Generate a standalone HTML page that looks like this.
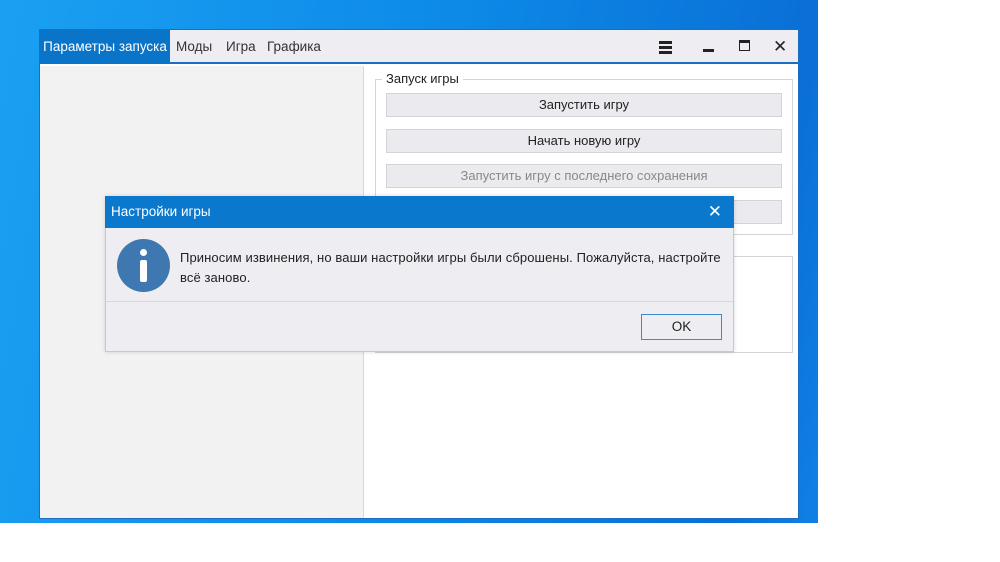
<!DOCTYPE html>
<html><head><meta charset="utf-8"><style>
*{margin:0;padding:0;box-sizing:border-box}
body{width:1000px;height:562px;background:#fff;position:relative;overflow:hidden;font-family:"Liberation Sans","DejaVu Sans",sans-serif;font-size:13px;color:#222}
.desk{position:absolute;left:0;top:0;width:818px;height:523px;background:linear-gradient(100deg,#1aa0f2 0%,#0d8ae8 50%,#0a6fd6 90%,#1180e6 100%)}
.abs{position:absolute}
.win{left:39px;top:29px;width:760px;height:490px;background:#fff;border:1px solid #1a6fc4}
.tb{left:0;top:0;width:758px;height:34px;background:#eeedf2;border-bottom:2px solid #1a6fc4}
.tab{top:0;height:34px;line-height:34px;font-size:13.5px;color:#333}
.btn{background:#ebeaef;border:1px solid #d4d3da;text-align:center;line-height:22px;font-size:13px;color:#222}
</style></head><body>
<div class="desk"></div>
<div class="abs win">
 <div class="abs tb">
  <div class="abs tab" style="left:0;width:130px;background:#0a74c9;color:#fff;text-align:center">Параметры запуска</div>
  <div class="abs tab" style="left:136px">Моды</div>
  <div class="abs tab" style="left:186px">Игра</div>
  <div class="abs tab" style="left:227px">Графика</div>
  <div class="abs" style="left:619px;top:11px;width:13px;height:3px;background:#222;box-shadow:0 5px 0 #222,0 10px 0 #222"></div>
  <div class="abs" style="left:663px;top:19px;width:11px;height:3px;background:#222"></div>
  <div class="abs" style="left:699px;top:10px;width:11px;height:11px;border:1.5px solid #222;border-top-width:3px"></div>
  <div class="abs" style="left:733px;top:7px;font-size:17px;color:#222">✕</div>
 </div>
 <div class="abs" style="left:0;top:36px;width:324px;height:452px;background:#f3f2f3;border-right:1px solid #d8d8de"></div>
 <div class="abs" style="left:335px;top:49px;width:418px;height:156px;border:1px solid #d4d3da"></div>
 <div class="abs" style="left:342px;top:41px;background:#fff;padding:0 4px;font-size:13px">Запуск игры</div>
 <div class="abs btn" style="left:346px;top:63px;width:396px;height:24px">Запустить игру</div>
 <div class="abs btn" style="left:346px;top:99px;width:396px;height:24px">Начать новую игру</div>
 <div class="abs btn" style="left:346px;top:134px;width:396px;height:24px;color:#888">Запустить игру с последнего сохранения</div>
 <div class="abs btn" style="left:346px;top:170px;width:396px;height:24px"></div>
 <div class="abs" style="left:335px;top:226px;width:418px;height:97px;border:1px solid #d4d3da"></div>
</div>
<div class="abs" style="left:105px;top:196px;width:629px;height:156px;background:#eeedf2;border:1px solid #c8c7d0;box-shadow:0 0 4px rgba(0,0,0,.15)">
 <div class="abs" style="left:-1px;top:-1px;width:629px;height:32px;background:#0a78cc;color:#fff;font-size:13.5px;line-height:32px;padding-left:6px">Настройки игры
  <span class="abs" style="right:12px;top:0;font-size:17px;font-weight:bold">✕</span></div>
 <div class="abs" style="left:11px;top:42px;width:53px;height:53px;border-radius:50%;background:#3f78b0"></div>
 <div class="abs" style="left:34px;top:52px;width:7px;height:7px;border-radius:50%;background:#fff"></div>
 <div class="abs" style="left:34px;top:63px;width:7px;height:22px;border-radius:2px;background:#fff"></div>
 <div class="abs" style="left:74px;top:51px;width:560px;font-size:13px;letter-spacing:0.1px;line-height:20px;color:#222">Приносим извинения, но ваши настройки игры были сброшены. Пожалуйста, настройте<br>всё заново.</div>
 <div class="abs" style="left:0;top:104px;width:627px;height:1px;background:#d8d7de"></div>
 <div class="abs" style="left:535px;top:117px;width:81px;height:26px;border:1px solid #3d8ad0;background:#eeedf2;text-align:center;line-height:24px;font-size:13.5px">OK</div>
</div>
</body></html>
